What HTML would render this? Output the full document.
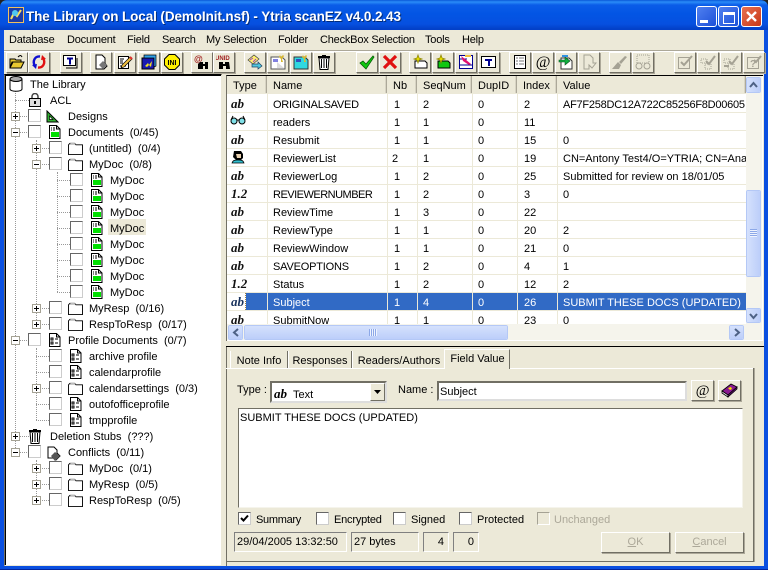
<!DOCTYPE html>
<html><head><meta charset="utf-8"><style>
html,body{margin:0;padding:0;background:#ECE9D8}
#w{position:relative;width:768px;height:570px;overflow:hidden;background:#ECE9D8;font:11px/18px "Liberation Sans",sans-serif;color:#000}
#w div,#w span,#w svg{position:absolute;white-space:nowrap}
#w b,#w i,#w u{position:static}
.m{top:31px;line-height:18px;letter-spacing:-.2px}
.t{width:22px;height:21px;top:52px;background:#ECE9D8;border:1px solid;border-color:#fff #716F64 #716F64 #fff;box-sizing:border-box;box-shadow:1px 1px 0 #ACA899}
.t svg{left:2px;top:1px;width:16px;height:16px}
.c{width:13px;height:13px;box-sizing:border-box;background:#fff;border:1px solid;border-color:#666 #ccc #ccc #666;margin-top:-1px}
.e{width:9px;height:9px;box-sizing:border-box;background:#fff;border:1px solid #A5A294;text-align:center}
.e::before{content:"";position:absolute;left:1px;top:3px;width:5px;height:1px;background:#000}
.p::after{content:"";position:absolute;left:3px;top:1px;width:1px;height:5px;background:#000}
.h{border-top:1px dotted #999;height:0}
.v{border-left:1px dotted #999;width:0}
.ic{width:16px;height:16px}
.x{line-height:18px}
.ab{font:italic bold 13px/14px "Liberation Serif",serif;left:231px;color:#111}
.hc{top:76px;height:17px;background:#ECE9D8;border-right:1px solid #ACA899;box-sizing:border-box;padding:1px 0 0 6px;box-shadow:inset -1px 0 0 #D8D4C4}
.rl{left:227px;width:519px;height:1px;background:#ECE9D8}
.cl{top:93px;height:231px;width:1px;background:#ECE9D8}
.sb{background:linear-gradient(#D5E1FC,#BCCEFA);border:1px solid #fff;outline:1px solid #B4C8F6;outline-offset:-1px;box-sizing:border-box;border-radius:2px}
.tab{top:351px;height:17px;box-sizing:border-box;padding-top:1px;text-align:center;border-left:1px solid #fff;border-right:1px solid #716F64}
.st{top:532px;height:20px;box-sizing:border-box;border:1px solid;border-color:#808080 #fff #fff #808080;padding-top:0}
.btn{top:532px;height:21px;box-sizing:border-box;width:69px;border:1px solid;border-color:#fff #716F64 #716F64 #fff;box-shadow:1px 1px 0 #ACA899;text-align:center;padding-top:0;color:#ACA899}
</style></head><body><div id="w">
<svg width="0" height="0" style="left:0;top:0">
<defs>
<symbol id="doc" viewBox="0 0 12 14"><path d="M.5.5h7l3.5 3.5v9.500h-10.500z" fill="#fff" stroke="#000"/><path d="M7.500.5v3.500h3.500M2 3h1M4 3h2M2 5h1M4 5h2" fill="none" stroke="#000"/><rect x="2" y="7" width="8" height="5" fill="#00E000"/></symbol>
<symbol id="fold" viewBox="0 0 16 14"><path d="M.5 13.500v-10.500l1.500-1.500h5l1.500 1.500h7v10.500z" fill="#fff" stroke="#000"/><path d="M1 3h7l-1-2h-4z" fill="#bbb"/></symbol>
<symbol id="prof" viewBox="0 0 12 14"><path d="M.5.5h7l3.500 3.500v9.500h-10.500z" fill="#fff" stroke="#000"/><path d="M7.500.5v3.500h3.500M2 5h2v2h-2zM2 9h2v2h-2zM6 6h3M6 10h3" fill="none" stroke="#000"/></symbol>
<symbol id="trash" viewBox="0 0 14 16"><path d="M2 4h10l-1 11.500h-8z" fill="#fff" stroke="#000"/><path d="M1 3.500h12M5 1.500h4M4.500 5v9M7 5v9M9.500 5v9" stroke="#000" fill="none"/><rect x="1" y="2" width="12" height="2" fill="#000"/></symbol>
</defs></svg>

<!-- title bar -->
<div style="left:0;top:0;width:768px;height:8px;background:#222"></div>
<div style="left:0;top:0;width:768px;height:30px;border-radius:7px 7px 0 0;background:linear-gradient(#0A58D8 0,#2A8CF8 2px,#0A5CE8 5px,#0355E4 14px,#0650E0 24px,#0340C8 29px)"></div>
<svg style="left:8px;top:7px" width="16" height="16" viewBox="0 0 16 16"><rect width="16" height="16" fill="#F0C060"/><rect x="1" y="1" width="14" height="14" fill="#1C3CA8"/><path d="M3 12l3-6 3 3 4-6" stroke="#F8E060" stroke-width="2" fill="none"/><circle cx="7" cy="6" r="3" fill="#50C8F0"/></svg>
<div style="left:26px;top:9px;color:#000;opacity:.45;margin:1px 0 0 1px;font:bold 13.500px/16px 'Liberation Sans',sans-serif;letter-spacing:-.1px">The Library on Local (DemoInit.nsf) - Ytria scanEZ v4.0.2.43</div>
<div style="left:26px;top:9px;color:#fff;font:bold 13.500px/16px 'Liberation Sans',sans-serif;letter-spacing:-.1px">The Library on Local (DemoInit.nsf) - Ytria scanEZ v4.0.2.43</div>
<div style="left:696px;top:6px;width:21px;height:21px;box-sizing:border-box;border:1px solid #fff;border-radius:3px;background:linear-gradient(135deg,#5080F0,#1C50D8)"><div style="left:3px;top:13px;width:8px;height:3px;background:#fff"></div></div>
<div style="left:718px;top:6px;width:21px;height:21px;box-sizing:border-box;border:1px solid #fff;border-radius:3px;background:linear-gradient(135deg,#5080F0,#1C50D8)"><div style="left:4px;top:5px;width:12px;height:12px;box-sizing:border-box;border:1px solid #fff;border-top-width:3px"></div></div>
<div style="left:741px;top:6px;width:21px;height:21px;box-sizing:border-box;border:1px solid #fff;border-radius:3px;background:linear-gradient(135deg,#E87050,#C83818)"><svg style="left:3px;top:3px" width="13" height="13" viewBox="0 0 13 13"><path d="M2 2l9 9M11 2l-9 9" stroke="#fff" stroke-width="2.400"/></svg></div>
<!-- window frame -->
<div style="left:0;top:30px;width:4px;height:540px;background:#0A4FE0"></div>
<div style="left:764px;top:30px;width:4px;height:540px;background:#0A4FE0"></div>
<div style="left:0;top:566px;width:768px;height:4px;background:#0A4FE0"></div>
<div style="left:0;top:569px;width:768px;height:1px;background:#03259C"></div>

<!-- menu -->
<div class="m" style="left:9px">Database</div>
<div class="m" style="left:67px">Document</div>
<div class="m" style="left:127px">Field</div>
<div class="m" style="left:162px">Search</div>
<div class="m" style="left:206px">My Selection</div>
<div class="m" style="left:278px">Folder</div>
<div class="m" style="left:320px">CheckBox Selection</div>
<div class="m" style="left:425px">Tools</div>
<div class="m" style="left:462px">Help</div>
<div style="left:4px;top:50px;width:760px;height:1px;background:#ACA899"></div>
<div style="left:4px;top:51px;width:760px;height:1px;background:#fff"></div>

<!-- toolbar -->
<div class="t" style="left:6px"><svg viewBox="0 0 16 16"><path d="M1 14V5h5l1 1h5v2H4L1 14l2-6h12l-3 6z" fill="#E8C830" stroke="#000"/><path d="M9 3c2-2 3-2 4 0" stroke="#000" fill="none"/></svg></div>
<div class="t" style="left:28px"><svg viewBox="0 0 16 16"><path d="M9 2.500C4 2 1 7 4 12" stroke="#1010D0" stroke-width="2.400" fill="none"/><path d="M1 11l5-1-1 5z" fill="#1010D0"/><path d="M7 13.500c5 .5 8-4.500 5-9.500" stroke="#E01010" stroke-width="2.400" fill="none"/><path d="M15 5l-5 1 1-5z" fill="#E01010"/></svg></div>
<div class="t" style="left:60px"><svg viewBox="0 0 16 16"><rect x=".5" y="1.500" width="12" height="10" fill="#fff" stroke="#000"/><path d="M14 4v10H3" stroke="#000" fill="none"/><path d="M4 3.500h6v2H8v5H6v-5H4z" fill="#000090"/></svg></div>
<div class="t" style="left:90px"><svg viewBox="0 0 16 16"><path d="M3 1h6l3 3v5l2 3-3 3H3z" fill="#fff" stroke="#000"/><path d="M10 7l4 4-4 4-4-4z" fill="#777"/></svg></div>
<div class="t" style="left:114px"><svg viewBox="0 0 16 16"><path d="M1.500 2.500h10v12h-10z" fill="#fff" stroke="#000"/><path d="M3 5h4M3 7h3M3 9h3M3 12h6" stroke="#000"/><path d="M5 11l8-8 2 2-8 8-3 1z" fill="#F0C040" stroke="#000" stroke-width=".7"/><path d="M13 3l2 2" stroke="#E03030" stroke-width="2"/></svg></div>
<div class="t" style="left:138px"><svg viewBox="0 0 16 16"><path d="M1 4h12v11H1z" fill="#1818B0" stroke="#000"/><path d="M3 1h12v11l-2 1V4H3z" fill="#30A0E8" stroke="#000" stroke-width=".7"/><path d="M4 12l3-3 1 2 3-4-1 6-2-2-2 2z" fill="#F0E020"/></svg></div>
<div class="t" style="left:161px"><svg viewBox="0 0 16 16"><path d="M5 .5h6l4.500 4.500v6L11 15.500H5L.5 11V5z" fill="#FFF000" stroke="#000"/><text x="8" y="11" font-family="Liberation Sans" font-size="7" font-weight="bold" text-anchor="middle">INI</text></svg></div>
<div class="t" style="left:191px"><svg viewBox="0 0 16 16"><text x="0" y="8" font-family="Liberation Sans" font-size="9" font-weight="bold" fill="#A02020">@</text><path d="M6 8h3v2h2V8h3v7h-3v-3H9v3H4v-5z" fill="#000"/></svg></div>
<div class="t" style="left:213px"><svg viewBox="0 0 16 16"><text x="-1" y="6" font-family="Liberation Sans" font-size="6" font-weight="bold" fill="#A02020">UNID</text><path d="M3 8h4v2h2V8h4l1 7h-4v-3H7v3H3z" fill="#000"/></svg></div>
<div class="t" style="left:244px"><svg viewBox="0 0 16 16"><path d="M1 6l6-5 5 4-6 5z" fill="#FFF070" stroke="#444" stroke-width=".7"/><path d="M3 6l3-2M6 8l3-3" stroke="#A040C0"/><path d="M5 10h6V8l4 4-4 3v-2H5z" fill="#50C8E0" stroke="#204060" stroke-width=".7"/></svg></div>
<div class="t" style="left:267px"><svg viewBox="0 0 16 16"><path d="M1 3h11l3 3v9H1z" fill="#fff" stroke="#555"/><path d="M3 5h5v3H3z" fill="#8080E0"/><path d="M7 8l7 6H7z" fill="#ddd"/><path d="M10 1l1 2 2-2 1 1-2 3 1 3h-2V5L9 3z" fill="#D8B830"/></svg></div>
<div class="t" style="left:290px"><svg viewBox="0 0 16 16"><path d="M1 3h11l3 3v9H1z" fill="#30D8E0" stroke="#333"/><path d="M3 5h5v3H3z" fill="#3050C0"/><path d="M10 1l1 2 2-2 1 1-2 3 1 3h-2V5L9 3z" fill="#D8B830"/></svg></div>
<div class="t" style="left:313px"><svg viewBox="0 0 16 16"><use href="#trash" width="14" height="16" x="1"/></svg></div>
<div class="t" style="left:356px"><svg viewBox="0 0 16 16"><path d="M1 9l3-2 3 3 7-8 1 1-8 12z" fill="#10C810" stroke="#086008" stroke-width=".8"/></svg></div>
<div class="t" style="left:379px"><svg viewBox="0 0 16 16"><path d="M2 2l12 12M14 2L2 14" stroke="#E01010" stroke-width="3.200"/></svg></div>
<div class="t" style="left:409px"><svg viewBox="0 0 16 16"><path d="M3 7h10l2 2v5H3z" fill="#fff" stroke="#000"/><path d="M6 1l1 3 3 1-3 1-1 3-1-3-3-1 3-1z" fill="#F0E800" stroke="#908800" stroke-width=".8"/></svg></div>
<div class="t" style="left:432px"><svg viewBox="0 0 16 16"><path d="M3 7h10l2 2v5H3z" fill="#10C810" stroke="#000"/><path d="M6 1l1 3 3 1-3 1-1 3-1-3-3-1 3-1z" fill="#F0E800" stroke="#908800" stroke-width=".8"/></svg></div>
<div class="t" style="left:455px"><svg viewBox="0 0 16 16"><path d="M1.500 1.500h13v13h-13z" fill="#fff" stroke="#000090"/><path d="M1 5h8M1 11h14" stroke="#000090"/><path d="M3 2l4 3 6 5-2 1L5 7z" fill="#E01070"/><path d="M7 1h6v2H7z" fill="#F0C040"/></svg></div>
<div class="t" style="left:478px"><svg viewBox="0 0 16 16"><rect x=".5" y="2.500" width="14" height="11" fill="#fff" stroke="#000"/><path d="M4 5h7v2H9v5H7V7H4z" fill="#000090"/></svg></div>
<div class="t" style="left:509px"><svg viewBox="0 0 16 16"><rect x="2.500" y="1.500" width="11" height="13" fill="#fff" stroke="#000"/><path d="M4 4h2M7 4h5M4 7h2M7 7h5M4 10h2M7 10h5" stroke="#777"/></svg></div>
<div class="t" style="left:532px"><svg viewBox="0 0 16 16"><text x="8" y="13" font-family="Liberation Serif" font-size="16" font-style="italic" text-anchor="middle">@</text></svg></div>
<div class="t" style="left:555px"><svg viewBox="0 0 16 16"><path d="M3 4h8l3 3v8H3z" fill="#fff" stroke="#333"/><path d="M1 6h6V3l5 4-5 4V8H1z" fill="#10B040" stroke="#085020" stroke-width=".6"/><path d="M4 1h6v2H4z" fill="#3090E0"/></svg></div>
<div class="t" style="left:578px"><svg viewBox="0 0 16 16"><path d="M3 1h6l3 3v5h3l-4 5-3-3v4H3z" fill="#ECE9D8" stroke="#A5A294"/></svg></div>
<div class="t" style="left:609px"><svg viewBox="0 0 16 16"><path d="M0 15l6-7 3 3-2 4zM7 8l6-6 2 1-6 7z" fill="#A5A294"/></svg></div>
<div class="t" style="left:632px"><svg viewBox="0 0 16 16"><path d="M2 1h12v8H2z" fill="none" stroke="#A5A294" stroke-dasharray="1 1"/><circle cx="4" cy="12" r="3" fill="none" stroke="#A5A294"/><circle cx="12" cy="12" r="3" fill="none" stroke="#A5A294"/></svg></div>
<div class="t" style="left:674px"><svg viewBox="0 0 16 16"><rect x="1.500" y="3.500" width="11" height="11" fill="none" stroke="#A5A294"/><path d="M4 8l3 3 8-9" stroke="#A5A294" stroke-width="2" fill="none"/></svg></div>
<div class="t" style="left:697px"><svg viewBox="0 0 16 16"><path d="M1 5h6v4H1zM5 10h6v5H5z" fill="none" stroke="#A5A294" stroke-dasharray="1 1"/><path d="M6 7l3 3 6-8" stroke="#A5A294" stroke-width="2" fill="none"/></svg></div>
<div class="t" style="left:720px"><svg viewBox="0 0 16 16"><path d="M1 5h6v4H1zM5 10h6v5H5z" fill="none" stroke="#A5A294" stroke-dasharray="1 1"/><path d="M6 7l3 3 6-8M1 12h5" stroke="#A5A294" stroke-width="2" fill="none"/></svg></div>
<div class="t" style="left:743px"><svg viewBox="0 0 16 16"><rect x="1.500" y="3.500" width="11" height="11" fill="none" stroke="#A5A294"/><text x="4" y="13" font-family="Liberation Sans" font-size="10" font-weight="bold" fill="#A5A294">?</text><path d="M8 6l2 2 5-6" stroke="#A5A294" stroke-width="2" fill="none"/></svg></div>

<!-- tree panel -->
<div style="left:4px;top:74px;width:218px;height:492px;background:#fff;box-sizing:border-box;border:1px solid;border-color:#000 #ECE9D8 #ECE9D8 #716F64;box-shadow:inset 1px 1px 0 #000"></div>
<div class="v" style="left:15px;top:90px;height:362px"></div>
<div class="v" style="left:36px;top:140px;height:184px"></div>
<div class="v" style="left:36px;top:348px;height:72px"></div>
<div class="v" style="left:36px;top:460px;height:40px"></div>
<div class="v" style="left:57px;top:172px;height:120px"></div>
<div class="h" style="left:15px;top:100px;width:14px"></div><div class="h" style="left:15px;top:116px;width:14px"></div><div class="h" style="left:15px;top:132px;width:14px"></div><div class="h" style="left:15px;top:340px;width:14px"></div><div class="h" style="left:15px;top:436px;width:14px"></div><div class="h" style="left:15px;top:452px;width:14px"></div>
<div class="h" style="left:36px;top:148px;width:13px"></div><div class="h" style="left:36px;top:164px;width:13px"></div><div class="h" style="left:36px;top:308px;width:13px"></div><div class="h" style="left:36px;top:324px;width:13px"></div><div class="h" style="left:36px;top:356px;width:13px"></div><div class="h" style="left:36px;top:372px;width:13px"></div><div class="h" style="left:36px;top:388px;width:13px"></div><div class="h" style="left:36px;top:404px;width:13px"></div><div class="h" style="left:36px;top:420px;width:13px"></div><div class="h" style="left:36px;top:468px;width:13px"></div><div class="h" style="left:36px;top:484px;width:13px"></div><div class="h" style="left:36px;top:500px;width:13px"></div>
<div class="h" style="left:57px;top:180px;width:13px"></div><div class="h" style="left:57px;top:196px;width:13px"></div><div class="h" style="left:57px;top:212px;width:13px"></div><div class="h" style="left:57px;top:228px;width:13px"></div><div class="h" style="left:57px;top:244px;width:13px"></div><div class="h" style="left:57px;top:260px;width:13px"></div><div class="h" style="left:57px;top:276px;width:13px"></div><div class="h" style="left:57px;top:292px;width:13px"></div>

<svg style="left:9px;top:76px" width="14" height="16" viewBox="0 0 14 16"><path d="M1 3v10c0 3 12 3 12 0V3" fill="#fff" stroke="#000"/><ellipse cx="7" cy="3" rx="6" ry="2.500" fill="#aaa" stroke="#000"/></svg>
<div class="x" style="left:30px;top:76px">The Library</div>
<svg style="left:29px;top:93px" width="12" height="14" viewBox="0 0 12 14"><path d="M3 6V3.500a3 3 0 016 0V6" fill="none" stroke="#444" stroke-width="1.500"/><rect x=".5" y="5.500" width="11" height="8" fill="#ddd" stroke="#000"/><rect x="5" y="8" width="2" height="3" fill="#000"/></svg>
<div class="x" style="left:50px;top:92px">ACL</div>

<div class="e p" style="left:11px;top:112px"></div><div class="c" style="left:28px;top:110px"></div>
<svg style="left:46px;top:110px" width="13" height="13" viewBox="0 0 13 13"><path d="M1 1v11h11z" fill="#30B030" stroke="#000"/><path d="M3.500 6v3.500h3.500z" fill="#fff" stroke="#000" stroke-width=".7"/></svg>
<div class="x" style="left:68px;top:108px">Designs</div>
<div class="e" style="left:11px;top:128px"></div><div class="c" style="left:28px;top:126px"></div>
<svg class="ic" style="left:49px;top:125px;width:12px;height:14px"><use href="#doc"/></svg>
<div class="x" style="left:68px;top:124px">Documents&nbsp; (0/45)</div>

<div class="e p" style="left:32px;top:144px"></div><div class="c" style="left:49px;top:142px"></div>
<svg style="left:68px;top:142px;width:15px;height:13px"><use href="#fold"/></svg>
<div class="x" style="left:89px;top:140px">(untitled)&nbsp; (0/4)</div>
<div class="e" style="left:32px;top:160px"></div><div class="c" style="left:49px;top:158px"></div>
<svg style="left:68px;top:158px;width:15px;height:13px"><use href="#fold"/></svg>
<div class="x" style="left:89px;top:156px">MyDoc&nbsp; (0/8)</div>

<div style="left:108px;top:219px;width:38px;height:16px;background:#ECE9D8"></div>
<div class="c" style="left:70px;top:174px"></div><svg style="left:91px;top:173px;width:12px;height:14px"><use href="#doc"/></svg><div class="x" style="left:110px;top:172px">MyDoc</div>
<div class="c" style="left:70px;top:190px"></div><svg style="left:91px;top:189px;width:12px;height:14px"><use href="#doc"/></svg><div class="x" style="left:110px;top:188px">MyDoc</div>
<div class="c" style="left:70px;top:206px"></div><svg style="left:91px;top:205px;width:12px;height:14px"><use href="#doc"/></svg><div class="x" style="left:110px;top:204px">MyDoc</div>
<div class="c" style="left:70px;top:222px"></div><svg style="left:91px;top:221px;width:12px;height:14px"><use href="#doc"/></svg><div class="x" style="left:110px;top:220px">MyDoc</div>
<div class="c" style="left:70px;top:238px"></div><svg style="left:91px;top:237px;width:12px;height:14px"><use href="#doc"/></svg><div class="x" style="left:110px;top:236px">MyDoc</div>
<div class="c" style="left:70px;top:254px"></div><svg style="left:91px;top:253px;width:12px;height:14px"><use href="#doc"/></svg><div class="x" style="left:110px;top:252px">MyDoc</div>
<div class="c" style="left:70px;top:270px"></div><svg style="left:91px;top:269px;width:12px;height:14px"><use href="#doc"/></svg><div class="x" style="left:110px;top:268px">MyDoc</div>
<div class="c" style="left:70px;top:286px"></div><svg style="left:91px;top:285px;width:12px;height:14px"><use href="#doc"/></svg><div class="x" style="left:110px;top:284px">MyDoc</div>

<div class="e p" style="left:32px;top:304px"></div><div class="c" style="left:49px;top:302px"></div><svg style="left:68px;top:302px;width:15px;height:13px"><use href="#fold"/></svg><div class="x" style="left:89px;top:300px">MyResp&nbsp; (0/16)</div>
<div class="e p" style="left:32px;top:320px"></div><div class="c" style="left:49px;top:318px"></div><svg style="left:68px;top:318px;width:15px;height:13px"><use href="#fold"/></svg><div class="x" style="left:89px;top:316px">RespToResp&nbsp; (0/17)</div>

<div class="e" style="left:11px;top:336px"></div><div class="c" style="left:28px;top:334px"></div><svg style="left:49px;top:333px;width:12px;height:14px"><use href="#prof"/></svg><div class="x" style="left:68px;top:332px">Profile Documents&nbsp; (0/7)</div>
<div class="c" style="left:49px;top:350px"></div><svg style="left:70px;top:349px;width:12px;height:14px"><use href="#prof"/></svg><div class="x" style="left:89px;top:348px">archive profile</div>
<div class="c" style="left:49px;top:366px"></div><svg style="left:70px;top:365px;width:12px;height:14px"><use href="#prof"/></svg><div class="x" style="left:89px;top:364px">calendarprofile</div>
<div class="e p" style="left:32px;top:384px"></div><div class="c" style="left:49px;top:382px"></div><svg style="left:68px;top:382px;width:15px;height:13px"><use href="#fold"/></svg><div class="x" style="left:89px;top:380px">calendarsettings&nbsp; (0/3)</div>
<div class="c" style="left:49px;top:398px"></div><svg style="left:70px;top:397px;width:12px;height:14px"><use href="#prof"/></svg><div class="x" style="left:89px;top:396px">outofofficeprofile</div>
<div class="c" style="left:49px;top:414px"></div><svg style="left:70px;top:413px;width:12px;height:14px"><use href="#prof"/></svg><div class="x" style="left:89px;top:412px">tmpprofile</div>

<div class="e p" style="left:11px;top:432px"></div><svg style="left:28px;top:428px;width:14px;height:16px"><use href="#trash"/></svg><div class="x" style="left:50px;top:428px">Deletion Stubs&nbsp; (???)</div>
<div class="e" style="left:11px;top:448px"></div><div class="c" style="left:28px;top:446px"></div>
<svg style="left:47px;top:445px" width="14" height="16" viewBox="0 0 14 16"><path d="M1 2h6l3 3v3l3 3-4 4-3-2H1z" fill="#fff" stroke="#000"/><path d="M8 7l5 4-5 5-4-5z" fill="#555"/></svg>
<div class="x" style="left:68px;top:444px">Conflicts&nbsp; (0/11)</div>
<div class="e p" style="left:32px;top:464px"></div><div class="c" style="left:49px;top:462px"></div><svg style="left:68px;top:462px;width:15px;height:13px"><use href="#fold"/></svg><div class="x" style="left:89px;top:460px">MyDoc&nbsp; (0/1)</div>
<div class="e p" style="left:32px;top:480px"></div><div class="c" style="left:49px;top:478px"></div><svg style="left:68px;top:478px;width:15px;height:13px"><use href="#fold"/></svg><div class="x" style="left:89px;top:476px">MyResp&nbsp; (0/5)</div>
<div class="e p" style="left:32px;top:496px"></div><div class="c" style="left:49px;top:494px"></div><svg style="left:68px;top:494px;width:15px;height:13px"><use href="#fold"/></svg><div class="x" style="left:89px;top:492px">RespToResp&nbsp; (0/5)</div>

<!-- list panel -->
<div style="left:226px;top:75px;width:536px;height:265px;background:#fff;border-top:1px solid #000;border-left:1px solid #716F64"></div>
<div class="hc" style="left:227px;width:40px">Type</div>
<div class="hc" style="left:267px;width:120px">Name</div>
<div class="hc" style="left:387px;width:30px">Nb</div>
<div class="hc" style="left:417px;width:55px">SeqNum</div>
<div class="hc" style="left:472px;width:45px">DupID</div>
<div class="hc" style="left:517px;width:40px">Index</div>
<div class="hc" style="left:557px;width:189px">Value</div>

<div style="left:227px;top:293px;width:519px;height:17px;background:#316AC5"></div>
<div class="rl" style="top:93px"></div><div class="rl" style="top:112px"></div><div class="rl" style="top:130px"></div><div class="rl" style="top:148px"></div><div class="rl" style="top:166px"></div><div class="rl" style="top:184px"></div><div class="rl" style="top:202px"></div><div class="rl" style="top:220px"></div><div class="rl" style="top:238px"></div><div class="rl" style="top:256px"></div><div class="rl" style="top:274px"></div><div class="rl" style="top:292px"></div><div class="rl" style="top:310px"></div>
<div class="cl" style="left:267px"></div><div class="cl" style="left:387px"></div><div class="cl" style="left:417px"></div><div class="cl" style="left:472px"></div><div class="cl" style="left:517px"></div><div class="cl" style="left:557px"></div>
<div style="left:227px;top:293px;width:19px;height:17px;background:#fff"></div>
<div style="left:246px;top:293px;width:21px;height:17px;background:#316AC5"></div>
<div style="left:245px;top:293px;width:1px;height:17px;border-left:1px dotted #A08040"></div>

<div class="ab" style="top:97px">ab</div><div style="left:273px;top:96px;letter-spacing:-.25px">ORIGINALSAVED</div><div style="left:394px;top:96px">1</div><div style="left:423px;top:96px">2</div><div style="left:478px;top:96px">0</div><div style="left:524px;top:96px">2</div><div style="left:563px;top:96px;width:183px;overflow:hidden;letter-spacing:-.25px">AF7F258DC12A722C85256F8D00605</div>
<svg style="left:230px;top:115px" width="16" height="10" viewBox="0 0 16 10"><circle cx="4" cy="6" r="3" fill="#80E0E8" stroke="#000"/><circle cx="12" cy="6" r="3" fill="#80E0E8" stroke="#000"/><path d="M1 5l2-4M15 5l-2-4M7 5h2" stroke="#000" fill="none"/></svg><div style="left:273px;top:114px">readers</div><div style="left:394px;top:114px">1</div><div style="left:423px;top:114px">1</div><div style="left:478px;top:114px">0</div><div style="left:524px;top:114px">11</div>
<div class="ab" style="top:133px">ab</div><div style="left:273px;top:132px">Resubmit</div><div style="left:394px;top:132px">1</div><div style="left:423px;top:132px">1</div><div style="left:478px;top:132px">0</div><div style="left:524px;top:132px">15</div><div style="left:563px;top:132px">0</div>
<svg style="left:231px;top:150px" width="14" height="14" viewBox="0 0 14 14"><path d="M3 1h7l2 3v4l-2 2H5L2 7z" fill="#000"/><path d="M5 4h5v4H6z" fill="#E8D0B0"/><path d="M1 13c1-3 3-3 6-3s5 0 6 3z" fill="#30C0D0" stroke="#000" stroke-width=".7"/></svg><div style="left:273px;top:150px">ReviewerList</div><div style="left:392px;top:150px">2</div><div style="left:423px;top:150px">1</div><div style="left:478px;top:150px">0</div><div style="left:524px;top:150px">19</div><div style="left:563px;top:150px;width:183px;overflow:hidden">CN=Antony Test4/O=YTRIA; CN=Ana</div>
<div class="ab" style="top:169px">ab</div><div style="left:273px;top:168px">ReviewerLog</div><div style="left:394px;top:168px">1</div><div style="left:423px;top:168px">2</div><div style="left:478px;top:168px">0</div><div style="left:524px;top:168px">25</div><div style="left:563px;top:168px">Submitted for review on 18/01/05</div>
<div class="ab" style="top:187px">1.2</div><div style="left:273px;top:186px;letter-spacing:-.5px">REVIEWERNUMBER</div><div style="left:394px;top:186px">1</div><div style="left:423px;top:186px">2</div><div style="left:478px;top:186px">0</div><div style="left:524px;top:186px">3</div><div style="left:563px;top:186px">0</div>
<div class="ab" style="top:205px">ab</div><div style="left:273px;top:204px">ReviewTime</div><div style="left:394px;top:204px">1</div><div style="left:423px;top:204px">3</div><div style="left:478px;top:204px">0</div><div style="left:524px;top:204px">22</div>
<div class="ab" style="top:223px">ab</div><div style="left:273px;top:222px">ReviewType</div><div style="left:394px;top:222px">1</div><div style="left:423px;top:222px">1</div><div style="left:478px;top:222px">0</div><div style="left:524px;top:222px">20</div><div style="left:563px;top:222px">2</div>
<div class="ab" style="top:241px">ab</div><div style="left:273px;top:240px">ReviewWindow</div><div style="left:394px;top:240px">1</div><div style="left:423px;top:240px">1</div><div style="left:478px;top:240px">0</div><div style="left:524px;top:240px">21</div><div style="left:563px;top:240px">0</div>
<div class="ab" style="top:259px">ab</div><div style="left:273px;top:258px;letter-spacing:-.2px">SAVEOPTIONS</div><div style="left:394px;top:258px">1</div><div style="left:423px;top:258px">2</div><div style="left:478px;top:258px">0</div><div style="left:524px;top:258px">4</div><div style="left:563px;top:258px">1</div>
<div class="ab" style="top:277px">1.2</div><div style="left:273px;top:276px">Status</div><div style="left:394px;top:276px">1</div><div style="left:423px;top:276px">2</div><div style="left:478px;top:276px">0</div><div style="left:524px;top:276px">12</div><div style="left:563px;top:276px">2</div>
<div class="ab" style="top:295px;color:#16305C">ab</div><div style="left:273px;top:294px;color:#fff">Subject</div><div style="left:394px;top:294px;color:#fff">1</div><div style="left:423px;top:294px;color:#fff">4</div><div style="left:478px;top:294px;color:#fff">0</div><div style="left:524px;top:294px;color:#fff">26</div><div style="left:563px;top:294px;color:#fff">SUBMIT THESE DOCS (UPDATED)</div>
<div class="ab" style="top:313px;height:11px;overflow:hidden">ab</div><div style="left:273px;top:312px;height:12px;overflow:hidden">SubmitNow</div><div style="left:394px;top:312px;height:12px;overflow:hidden">1</div><div style="left:423px;top:312px;height:12px;overflow:hidden">1</div><div style="left:478px;top:312px;height:12px;overflow:hidden">0</div><div style="left:524px;top:312px;height:12px;overflow:hidden">23</div><div style="left:563px;top:312px;height:12px;overflow:hidden">0</div>

<!-- h scrollbar -->
<div style="left:227px;top:324px;width:519px;height:16px;background:#F5F4EC"></div>
<div class="sb" style="left:228px;top:325px;width:15px;height:15px"><svg style="left:3px;top:2px" width="8" height="9" viewBox="0 0 8 9"><path d="M6 1L2 4.500 6 8" stroke="#4D6185" stroke-width="2" fill="none"/></svg></div>
<div class="sb" style="left:244px;top:325px;width:264px;height:15px"><div style="left:124px;top:3px;width:8px;height:7px;background:repeating-linear-gradient(90deg,#8CA8E8 0 1px,#EEF3FE 1px 2px)"></div></div>
<div class="sb" style="left:729px;top:325px;width:15px;height:15px"><svg style="left:3px;top:2px" width="8" height="9" viewBox="0 0 8 9"><path d="M2 1l4 3.500L2 8" stroke="#4D6185" stroke-width="2" fill="none"/></svg></div>
<!-- v scrollbar -->
<div style="left:746px;top:76px;width:16px;height:264px;background:#F5F4EC"></div>
<div class="sb" style="left:746px;top:77px;width:15px;height:16px;background:linear-gradient(90deg,#D5E1FC,#BCCEFA)"><svg style="left:2px;top:3px" width="9" height="8" viewBox="0 0 9 8"><path d="M1 6l3.500-4L8 6" stroke="#4D6185" stroke-width="2" fill="none"/></svg></div>
<div class="sb" style="left:746px;top:190px;width:15px;height:87px;background:linear-gradient(90deg,#D5E1FC,#BCCEFA)"><div style="left:3px;top:38px;width:7px;height:8px;background:repeating-linear-gradient(#8CA8E8 0 1px,#EEF3FE 1px 2px)"></div></div>
<div class="sb" style="left:746px;top:308px;width:15px;height:15px;background:linear-gradient(90deg,#D5E1FC,#BCCEFA)"><svg style="left:2px;top:3px" width="9" height="8" viewBox="0 0 9 8"><path d="M1 2l3.500 4L8 2" stroke="#4D6185" stroke-width="2" fill="none"/></svg></div>

<!-- bottom panel -->
<div style="left:226px;top:346px;width:538px;height:1px;background:#000"></div>
<div style="left:226px;top:347px;width:1px;height:219px;background:#716F64"></div>
<div style="left:226px;top:368px;width:527px;height:1px;background:#fff"></div>
<div style="left:753px;top:368px;width:1px;height:193px;background:#716F64"></div>
<div style="left:754px;top:368px;width:1px;height:194px;background:#ACA899"></div>
<div style="left:227px;top:561px;width:527px;height:1px;background:#716F64"></div>
<div class="tab" style="left:230px;width:58px">Note Info</div>
<div class="tab" style="left:288px;width:64px">Responses</div>
<div class="tab" style="left:352px;width:93px;border-right:0">Readers/Authors</div>
<div style="left:444px;top:349px;width:66px;height:20px;background:#ECE9D8;box-sizing:border-box;border-top:1px solid #fff;border-left:1px solid #fff;border-right:1px solid #716F64;text-align:center;padding:0 0 0 1px">Field Value</div>

<div style="left:237px;top:381px">Type :</div>
<div style="left:270px;top:381px;width:117px;height:22px;box-sizing:border-box;background:#fff;border:2px solid;border-color:#716F64 #ddd #ddd #716F64;outline:0"></div>
<div style="left:274px;top:387px;font:italic bold 13px/14px 'Liberation Serif',serif">ab</div>
<div style="left:293px;top:386px">Text</div>
<div style="left:370px;top:383px;width:15px;height:18px;box-sizing:border-box;background:#ECE9D8;border:1px solid;border-color:#fff #716F64 #716F64 #fff"></div>
<svg style="left:373px;top:390px" width="9" height="5" viewBox="0 0 9 5"><path d="M1 0h7L4.500 4z" fill="#000"/></svg>
<div style="left:398px;top:381px">Name :</div>
<div style="left:437px;top:381px;width:250px;height:20px;box-sizing:border-box;background:#fff;border:2px solid;border-color:#716F64 #ddd #ddd #716F64;padding:0 0 0 1px">Subject</div>
<div style="left:691px;top:380px;width:23px;height:21px;box-sizing:border-box;border:1px solid;border-color:#fff #716F64 #716F64 #fff;box-shadow:1px 1px 0 #ACA899"><svg style="left:3px;top:2px" width="15" height="15" viewBox="0 0 16 16"><text x="8" y="13" font-family="Liberation Serif" font-size="16" font-style="italic" text-anchor="middle">@</text></svg></div>
<div style="left:718px;top:380px;width:23px;height:21px;box-sizing:border-box;border:1px solid;border-color:#fff #716F64 #716F64 #fff;box-shadow:1px 1px 0 #ACA899"><svg style="left:2px;top:1px" width="18" height="17" viewBox="0 0 18 17"><path d="M1 9l9-7 6 3-9 8z" fill="#8A1A90" stroke="#000" stroke-width=".8"/><path d="M1 9l6 4v2l-6-4z" fill="#fff" stroke="#000" stroke-width=".8"/><path d="M7 13l9-8v2l-9 8z" fill="#601070" stroke="#000" stroke-width=".8"/><path d="M7 6l3-1 1 2-2 1z" fill="#F8E000"/></svg></div>
<div style="left:238px;top:408px;width:505px;height:100px;box-sizing:border-box;background:#fff;border:1px solid;border-color:#716F64 #F5F4EC #F5F4EC #716F64;padding:0 0 0 1px">SUBMIT THESE DOCS (UPDATED)</div>

<div class="c" style="left:238px;top:513px"></div><svg style="left:240px;top:514px" width="9" height="9" viewBox="0 0 9 9"><path d="M1 4l2.500 2.500L8 1.500" stroke="#000" stroke-width="2" fill="none"/></svg>
<div style="left:256px;top:511px;letter-spacing:-.3px">Summary</div>
<div class="c" style="left:316px;top:513px"></div><div style="left:334px;top:511px;letter-spacing:-.2px">Encrypted</div>
<div class="c" style="left:393px;top:513px"></div><div style="left:411px;top:511px">Signed</div>
<div class="c" style="left:459px;top:513px"></div><div style="left:477px;top:511px">Protected</div>
<div class="c" style="left:537px;top:513px;background:#ECE9D8;border-color:#A5A294 #fff #fff #A5A294"></div><div style="left:554px;top:511px;color:#ACA899">Unchanged</div>

<div class="st" style="left:234px;width:113px;padding-left:2px">29/04/2005 13:32:50</div>
<div class="st" style="left:351px;width:68px;padding-left:2px">27 bytes</div>
<div class="st" style="left:423px;width:26px;text-align:right;padding-right:4px">4</div>
<div class="st" style="left:453px;width:26px;text-align:right;padding-right:4px">0</div>
<div class="btn" style="left:601px"><u>O</u>K</div>
<div class="btn" style="left:675px"><u>C</u>ancel</div>
</div></body></html>
